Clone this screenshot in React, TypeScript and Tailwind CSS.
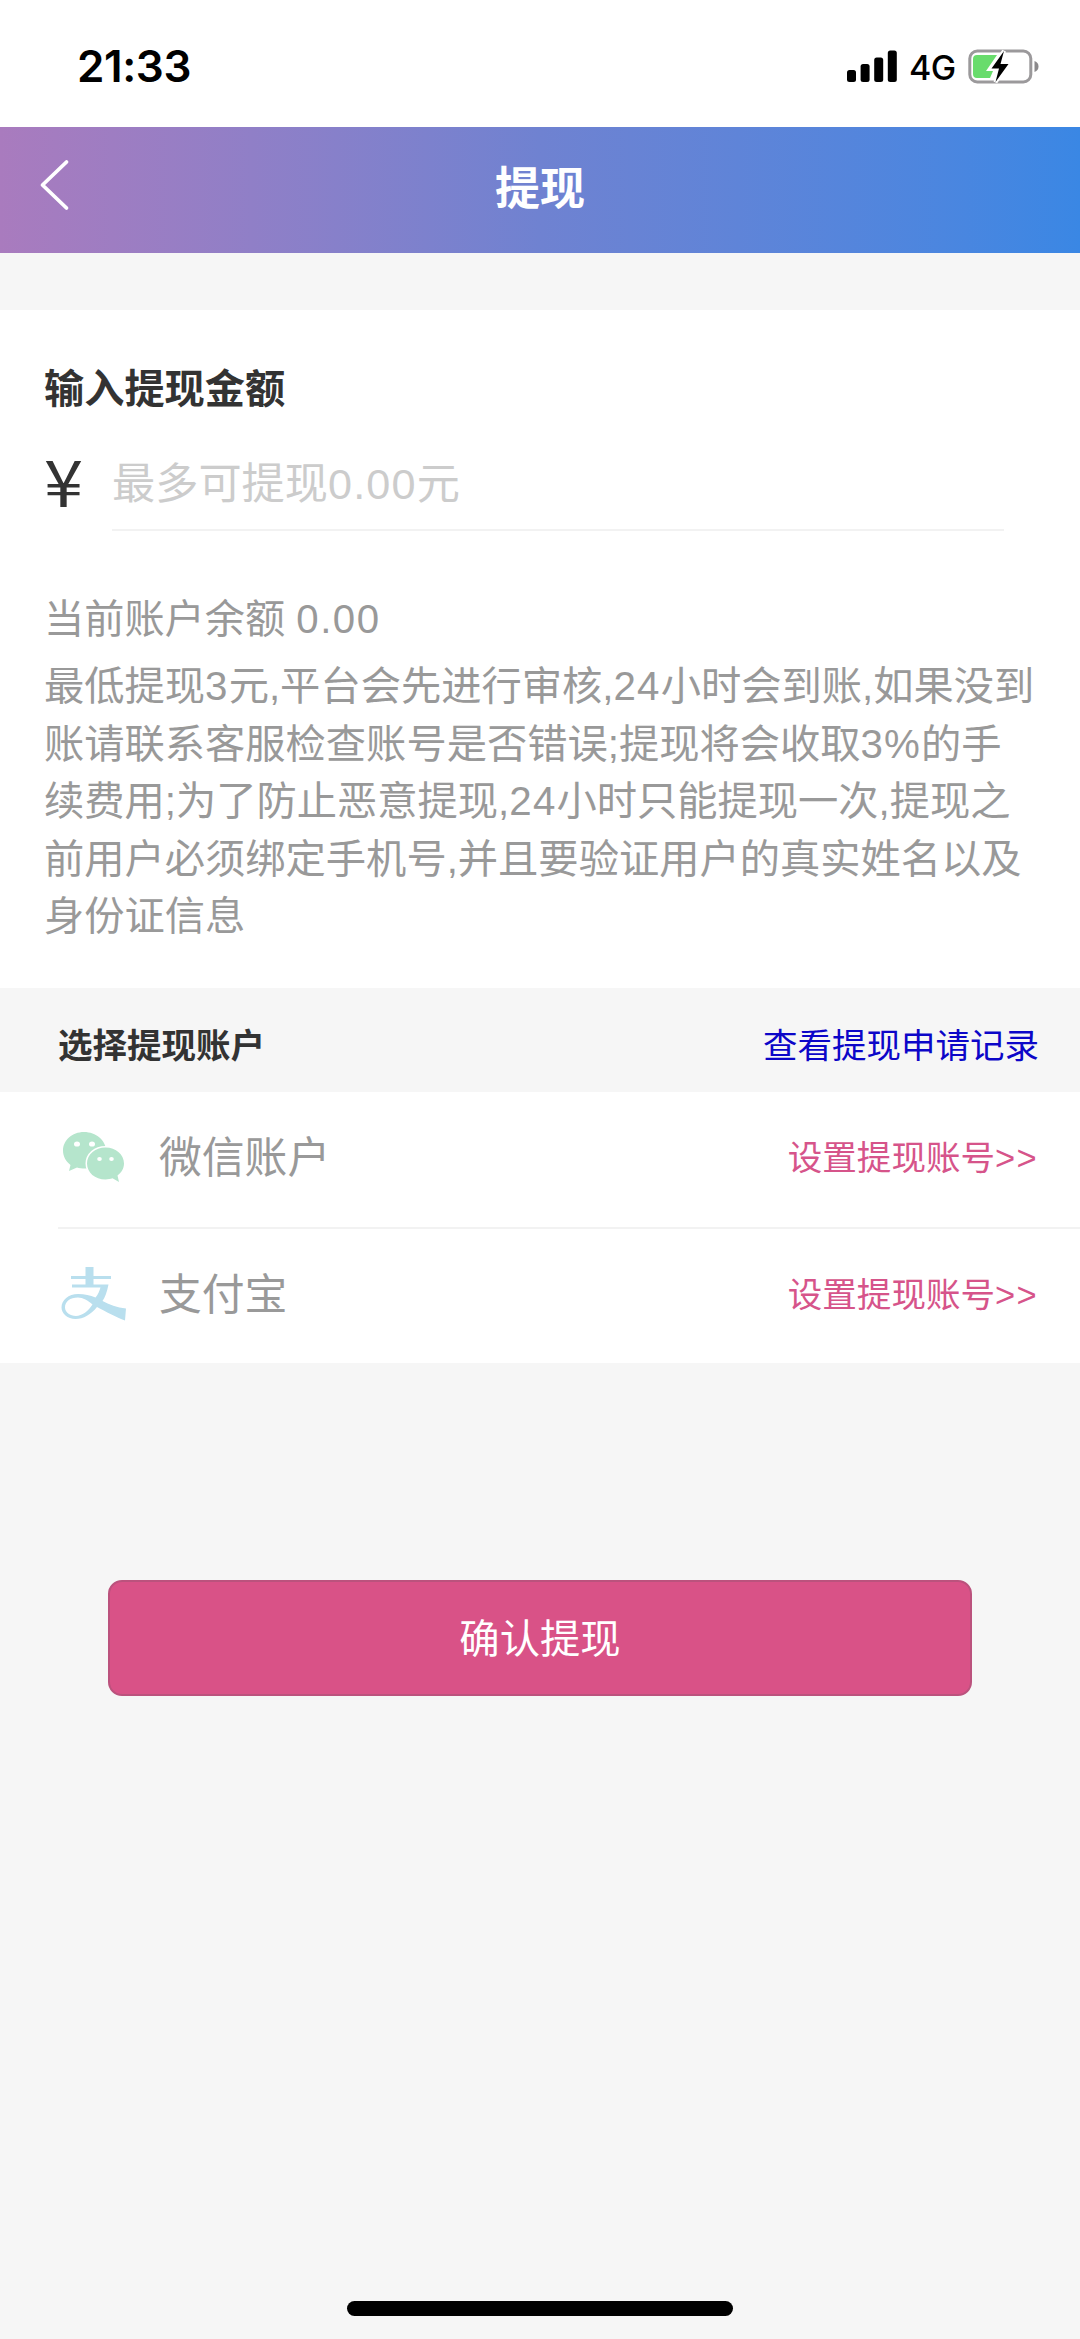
import React from "react";

function StatusBar() {
  return (
    <div className="flex h-[127px] items-center justify-between pr-[40px] pl-[77px] pt-[5px] text-black">
      <span className="font-['Inter'] text-[44px] font-semibold leading-none tracking-[-0.400px]">21:33</span>
      <div className="flex items-center">
        <svg width="50" height="32" viewBox="0 0 50 32">
          <rect x="0" y="20" width="9" height="12" rx="2.5" />
          <rect x="13.6" y="14" width="9" height="18" rx="2.5" />
          <rect x="27.2" y="7.500" width="9" height="24.500" rx="2.500" />
          <rect x="40.800" y="0.500" width="9" height="31.500" rx="2.500" />
        </svg>
        <span className="ml-[12px] mt-[3px] w-[48px] font-['Inter'] text-[34px] font-medium leading-none tracking-[-0.500px]">4G</span>
        <svg className="ml-[11px]" width="72" height="36" viewBox="0 0 72 36">
          <rect x="1.800" y="3" width="61" height="31" rx="7.500" fill="none" stroke="#9b999b" strokeWidth="3" />
          <path d="M66.500 13C69.500 14 70.500 16 70.500 18.500S69.500 23 66.500 24Z" fill="#8b898b" />
          <path d="M9 7H29L18 23H25L22 30H9Q5 30 5 26V11Q5 7 9 7Z" fill="#68dc6c" />
          <path d="M36 3L23.500 20.500H31L27.500 34L40.500 16H32.500Z" fill="#000" stroke="#fff" strokeWidth="4" paintOrder="stroke" />
        </svg>
      </div>
    </div>
  );
}

function Header() {
  return (
    <header className="grid h-[126px] grid-cols-[1fr_auto_1fr] items-center bg-linear-to-r from-[#a97bbe] via-[#6f82d1] to-[#3a87e4] text-white">
      <svg className="ml-[38px] -mt-[11px]" width="34" height="54" viewBox="0 0 34 54" fill="none" stroke="#fff" strokeWidth="3.800" strokeLinecap="round" strokeLinejoin="round">
        <path d="M28.500 4L4.500 27L28.500 50" />
      </svg>
      <h1 className="-mt-[2px] text-[45px] font-bold leading-none">提现</h1>
    </header>
  );
}

function WechatIcon() {
  return (
    <svg className="-mt-[5px]" width="66" height="56" viewBox="0 0 66 56">
      <path d="M23 3C11 3 2 11.500 2 21.500C2 27.500 5 32.500 9.500 36L8 42L16 38.500C18 39.200 21 39.500 24 39.500C36 39.500 45 31.500 45 21.500C45 11.500 35 3 23 3Z" fill="#b5e5cc" />
      <ellipse cx="16" cy="15" rx="3" ry="2.600" fill="#fff" />
      <ellipse cx="31" cy="15" rx="3" ry="2.600" fill="#fff" />
      <path d="M44.500 18.500C34 18.500 26 25.500 26 34.500C26 43.500 34 50.500 44.500 50.500C47 50.500 49.500 50 51.500 49.300L58 53L56.500 46.500C60.500 43.500 63 39.500 63 34.500C63 25.500 55 18.500 44.500 18.500Z" fill="#b5e5cc" stroke="#fff" strokeWidth="3" paintOrder="stroke" />
      <ellipse cx="38.500" cy="30" rx="2.300" ry="2" fill="#fff" />
      <ellipse cx="50.500" cy="30" rx="2.300" ry="2" fill="#fff" />
    </svg>
  );
}

function AlipayIcon() {
  return (
    <svg className="-mt-[5px]" width="66" height="56" viewBox="0 0 66 56" fill="#b9dfee">
      <path d="M24.500 1H32.500V10H50V13H32.500V18.500H47.500C46 26 44 31.500 41.500 35C48 38.500 56 41.500 65 42.500L64 54.500C55.500 51.500 44.500 45.500 36 41C30 48.500 22.500 53 14.500 53C6.500 53 0.500 47.500 0.500 41.500C0.500 34 7.500 28 17 28C24 28 29 29.500 34.500 31.500C37 28.500 38.500 25 39.500 21.500H11V18.500H24.500V13H10V10H24.500ZM17 31.500C9 31.500 4 35.500 4 41.500C4 46 9 50 15 50C21 50 27.500 45 31.500 38.500C27 34.500 22 31.500 17 31.500Z" fillRule="evenodd" />
    </svg>
  );
}

function AccountRow({ icon, name }: { icon: React.ReactNode; name: string }) {
  return (
    <div className="flex h-full items-center pl-[61px] pr-[42px]">
      {icon}
      <span className="-mt-[2px] ml-[32px] text-[42.800px] leading-none text-[#999]">{name}</span>
      <span className="-mt-[2px] ml-auto text-[34.560px] leading-none text-[#d6548a]">
        设置提现账号<span className="tracking-[1.300px]">&gt;&gt;</span>
      </span>
    </div>
  );
}

const notice = [
  "最低提现3元,平台会先进行审核,24小时会到账,如果没到",
  "账请联系客服检查账号是否错误;提现将会收取3%的手",
  "续费用;为了防止恶意提现,24小时只能提现一次,提现之",
  "前用户必须绑定手机号,并且要验证用户的真实姓名以及",
  "身份证信息",
];

// Numbers are set slightly looser than the characters around them.
function NoticeLine({ text }: { text: string }) {
  return (
    <p className="whitespace-nowrap">
      {text.split(/([0-9%]+)/).map((part, i) =>
        i % 2 ? (
          <span key={i} className="tracking-[1.200px]">{part}</span>
        ) : (
          part
        )
      )}
    </p>
  );
}

export default function App() {
  return (
    <div className="flex h-[2339px] w-[1080px] flex-col bg-[#f6f6f6] font-['Liberation_Sans','Noto_Sans_CJK_SC',sans-serif]">
      <div className="bg-white">
        <StatusBar />
      </div>
      <Header />
      <section className="mt-[57px] h-[678px] bg-white pl-[44px] pt-[60px]">
        <h2 className="text-[40.200px] font-bold leading-[40px] text-[#333]">输入提现金额</h2>
        <div className="mt-[39px] flex h-[82px] w-[960px]">
          <span className="w-[68px]">
            <span className="-mt-[5px] inline-block origin-left scale-x-110 font-['Noto_Sans_CJK_SC'] text-[64px] leading-[70px] text-[#333]">¥</span>
          </span>
          <div className="flex-1 border-b-2 border-[#f2f2f2] text-[43.200px] leading-[70px] text-[#ccc]">
            最多可提现<span className="tracking-[1.200px]">0.00</span>元
          </div>
        </div>
        <p className="mt-[59px] text-[40.200px] leading-[60px] text-[#999]">
          当前账户余额 <span className="tracking-[1.500px]">0.00</span>
        </p>
        <div className="mt-[8px] text-[40.270px] leading-[57.600px] text-[#999]">
          {notice.map((line) => (
            <NoticeLine key={line} text={line} />
          ))}
        </div>
      </section>
      <div className="flex h-[104px] items-center justify-between pl-[58px] pr-[41px] pt-[12px] text-[34.500px] leading-none">
        <h3 className="font-bold text-[#333]">选择提现账户</h3>
        <a className="text-[#0c06c8]">查看提现申请记录</a>
      </div>
      <section className="bg-white">
        <div className="h-[135px]">
          <AccountRow icon={<WechatIcon />} name="微信账户" />
        </div>
        <div className="ml-[58px] h-[2px] bg-[#f2f2f2]" />
        <div className="h-[134px]">
          <AccountRow icon={<AlipayIcon />} name="支付宝" />
        </div>
      </section>
      <button className="mx-auto mt-[217px] h-[116px] w-[864px] rounded-[14px] border-2 border-[#bb527d] bg-[#d95287] pt-[2px] text-[40.320px] leading-none text-white">
        确认提现
      </button>
      <div className="mx-auto mt-auto mb-[23px] h-[15px] w-[386px] rounded-full bg-black" />
    </div>
  );
}
